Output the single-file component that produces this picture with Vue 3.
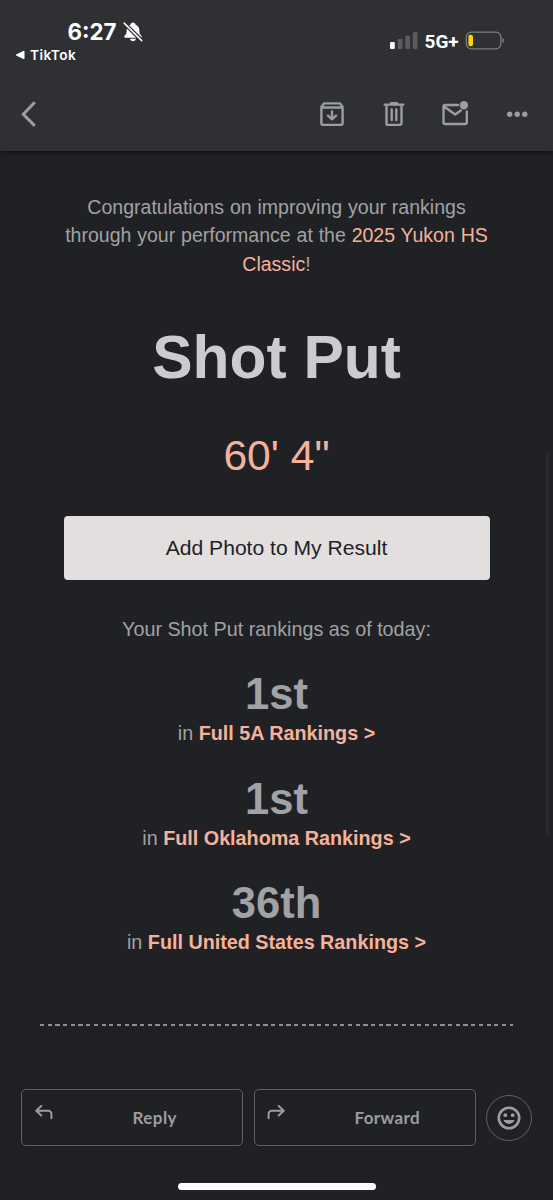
<script setup>
const rankings = [
  { place: '1st', scope: 'Full 5A Rankings >' },
  { place: '1st', scope: 'Full Oklahoma Rankings >' },
  { place: '36th', scope: 'Full United States Rankings >' },
]
</script>

<template>
  <div class="screen">
    <header class="header">
      <div class="status">
        <div class="status-left">
          <div class="clock">
            <span class="time">6:27</span>
            <svg class="bell" width="20" height="20" viewBox="0 0 20 20">
              <path d="M10 .4c1.400 0 2.300.9 2.400 2 2.500.9 3.900 3 3.900 5.800 0 3.100.8 4.300 2 5.500.9.900.5 2-.8 2H2.500c-1.300 0-1.700-1.100-.8-2 1.200-1.200 2-2.400 2-5.500 0-2.800 1.400-4.900 3.900-5.800.1-1.100 1-2 2.400-2zM7 16.800h6c-.3 1.500-1.400 2.500-3 2.500s-2.700-1-3-2.500z" fill="#fff" />
              <path d="M1.200 1.100 19 18.900" stroke="#2f3034" stroke-width="4" />
              <path d="M1.200 1.100 18.700 18.600" stroke="#fff" stroke-width="1.500" stroke-linecap="round" />
            </svg>
          </div>
          <div class="back-app">
            <svg width="10" height="10" viewBox="0 0 10 10"><path d="M9 1.200v7.600L1.200 5z" fill="#fff" stroke="#fff" stroke-linejoin="round" /></svg>
            <span>TikTok</span>
          </div>
        </div>
        <div class="status-right">
          <svg width="28" height="18" viewBox="0 0 28 18">
            <rect x="0" y="10" width="4.800" height="7" rx="1.300" fill="#fff" />
            <rect x="7.700" y="7" width="4.800" height="10" rx="1.300" fill="#5a5b5f" />
            <rect x="15.300" y="3.500" width="4.800" height="13.500" rx="1.300" fill="#5a5b5f" />
            <rect x="22.800" y="0" width="4.600" height="17" rx="1.300" fill="#5a5b5f" />
          </svg>
          <span class="network">5G+</span>
          <svg width="40" height="20" viewBox="0 0 40 20">
            <rect x="1.300" y="1.200" width="34.600" height="16.600" rx="5" fill="none" stroke="#7c7d81" stroke-width="1.300" />
            <rect x="3.400" y="3.700" width="4.600" height="11.600" rx="2" fill="#fcd20b" />
            <path d="M37.500 6.800c2 .8 2 4.600 0 5.400z" fill="#7c7d81" />
          </svg>
        </div>
      </div>
      <nav class="toolbar">
        <svg class="chevron" width="30" height="30" viewBox="0 0 30 30"><path d="M20.800 3.300 9.300 15.200l11.500 11.700" class="line thick" /></svg>
        <svg width="30" height="30" viewBox="0 0 30 30" class="line">
          <path d="M4.400 8 7 4.400h16L25.600 8v16.300a1.600 1.600 0 0 1-1.600 1.600H6a1.600 1.600 0 0 1-1.600-1.600zM4.400 8.500h21.200M15 12.500v7.800M11 16.700l4 3.800 4-3.800" />
        </svg>
        <svg width="30" height="30" viewBox="0 0 30 30" class="line">
          <path d="M5.700 5.600h18.600M7.500 6v18.500a1.400 1.400 0 0 0 1.400 1.400h12.200a1.400 1.400 0 0 0 1.400-1.400V6M12.700 10.500v10.500M17.300 10.500v10.500" />
          <path d="M12 4.300h6" />
        </svg>
        <svg width="30" height="30" viewBox="0 0 30 30">
          <path class="line" d="M18 6H5a1.500 1.500 0 0 0-1.500 1.500v16A1.500 1.500 0 0 0 5 25h20.300a1.500 1.500 0 0 0 1.500-1.500V12.500M4 7.500l11.200 8 5.600-4" />
          <circle cx="23.900" cy="6.200" r="4.200" fill="#9b9da1" />
        </svg>
        <svg width="30" height="30" viewBox="0 0 30 30" fill="#9b9da1">
          <circle cx="7.700" cy="15.300" r="2.700" /><circle cx="15.200" cy="15.300" r="2.700" /><circle cx="22.800" cy="15.300" r="2.700" />
        </svg>
      </nav>
    </header>

    <main class="mail">
      <p class="intro">
        Congratulations on improving your rankings through your performance at the <a>2025 Yukon HS Classic</a>!
      </p>
      <h1>Shot Put</h1>
      <div class="mark">60' 4"</div>
      <button class="photo">Add Photo to My Result</button>
      <p class="as-of">Your Shot Put rankings as of today:</p>
      <section v-for="r in rankings" :key="r.scope" class="rank">
        <div class="place">{{ r.place }}</div>
        <div class="scope">in <a>{{ r.scope }}</a></div>
      </section>
      <div class="divider"></div>
    </main>

    <footer class="actions">
      <button class="action">
        <svg width="18" height="14" viewBox="0 0 18 14"><path class="line thin" d="M6.300.9 1.300 5.700l5 4.800M1.600 5.700h11.600a3.200 3.200 0 0 1 3.200 3.200v4.300" /></svg>
        <span>Reply</span>
      </button>
      <button class="action">
        <svg width="18" height="14" viewBox="0 0 18 14"><path class="line thin" d="M11.700.9l5 4.800-5 4.800M16.400 5.700H4.800a3.200 3.200 0 0 0-3.200 3.200v4.300" /></svg>
        <span>Forward</span>
      </button>
      <button class="emoji">
        <svg width="24" height="24" viewBox="0 0 24 24">
          <circle cx="12" cy="12" r="10.200" fill="none" stroke="#9b9da1" stroke-width="2.600" />
          <circle cx="8.300" cy="9.200" r="1.900" fill="#9b9da1" /><circle cx="15.700" cy="9.200" r="1.900" fill="#9b9da1" />
          <path d="M6.400 14h11.200c-.8 2.300-2.900 3.900-5.600 3.900S7.200 16.300 6.400 14z" fill="#9b9da1" />
        </svg>
      </button>
    </footer>
    <div class="home"></div>
    <div class="scrollbar"></div>
  </div>
</template>

<style>
body { margin: 0; background: #202125; }
</style>

<style scoped>
.screen {
  position: relative;
  box-sizing: border-box;
  width: 553px;
  height: 1200px;
  overflow: hidden;
  display: flex;
  flex-direction: column;
  background: #202125;
  color: #a1a2a5;
  font-family: "Liberation Sans", Arial, sans-serif;
}
svg { display: block; flex: none; }
.line {
  fill: none;
  stroke: #9b9da1;
  stroke-width: 2.4;
  stroke-linecap: round;
  stroke-linejoin: round;
}
.thin { stroke-width: 2; }
.thick { stroke-width: 3; stroke-linecap: butt; stroke-linejoin: miter; }
.header {
  height: 151px;
  flex: none;
  background: #2f3034;
  box-shadow: 0 1px 6px rgba(0, 0, 0, .6);
}
.status {
  height: 99px;
  display: flex;
  justify-content: space-between;
  color: #fff;
}
.status-left { padding: 18px 0 0 15px; font-family: Inter, sans-serif; }
.clock { display: flex; align-items: center; height: 27px; padding-left: 52.5px; }
.time { width: 55px; font-size: 22.3px; font-weight: 700; line-height: 27px; }
.back-app {
  display: flex;
  align-items: center;
  gap: 5px;
  height: 20px;
  font-size: 13.7px;
  font-weight: 600;
  letter-spacing: .4px;
}
.status-right { display: flex; align-items: center; height: 20px; padding: 31px 48px 0 0; }
.network {
  width: 47px;
  padding-left: 6.5px;
  box-sizing: border-box;
  font: 700 19px/22px Roboto, sans-serif;
  padding-top: 2px;
}
.toolbar { display: flex; gap: 31.7px; padding: 0 21px 0 14px; }
.chevron { margin-right: auto; }
.mail {
  flex: none;
  height: 938px;
  box-sizing: border-box;
  padding: 42px 40px 0;
  text-align: center;
}
p, h1 { margin: 0; }
a { color: #f5b29b; }
.intro { padding: 0 20px; font-size: 19.55px; line-height: 28.3px; word-spacing: .4px; }
h1 {
  margin-top: 44px;
  color: #cbcccd;
  font-size: 60.5px;
  line-height: 70px;
}
.mark { margin-top: 37.5px; color: #f5b29b; font-size: 42.6px; line-height: 52px; }
button { padding: 0; border: 0; background: none; color: inherit; }
.photo {
  display: block;
  width: 426px;
  height: 64px;
  margin: 35px 0 0 23.5px;
  border-radius: 4px;
  background: #e4dfdf;
  color: #202125;
  font: 21.1px "Liberation Sans", Arial, sans-serif;
}
.as-of { margin-top: 35px; font-size: 19.75px; line-height: 28px; }
.rank { height: 104.3px; }
.rank:first-of-type { margin-top: 25px; }
.place { font-size: 43.5px; font-weight: 700; line-height: 53px; }
.scope { font-size: 19.75px; line-height: 25px; }
.scope a { font-weight: 700; }
.divider {
  height: 2px;
  margin-top: 42.6px;
  background: repeating-linear-gradient(90deg, #8f9093 0 4.2px, transparent 4.2px 7.7px);
}
.actions { display: flex; align-items: center; gap: 10.5px; padding: 0 21px; height: 57px; flex: none; }
.action {
  display: flex;
  align-items: center;
  box-sizing: border-box;
  width: 222px;
  height: 57px;
  padding-left: 12.5px;
  border: 1px solid #5f6165;
  border-radius: 5px;
  font: 700 17px Lato, sans-serif;
  color: #9b9da1;
}
.action svg { margin-bottom: 11px; }
.action span { flex: 1; padding-left: 15px; text-align: center; letter-spacing: .4px; }
.emoji {
  display: grid;
  place-items: center;
  box-sizing: border-box;
  width: 46px;
  height: 46px;
  border: 1px solid #5f6165;
  border-radius: 50%;
}
.home { width: 198px; height: 7px; margin: 37px auto 0; border-radius: 4px; background: #fff; }
.scrollbar {
  position: absolute;
  top: 453px;
  right: 4px;
  width: 3px;
  height: 383px;
  border-radius: 2px;
  background: #2a2b2f;
}
</style>
